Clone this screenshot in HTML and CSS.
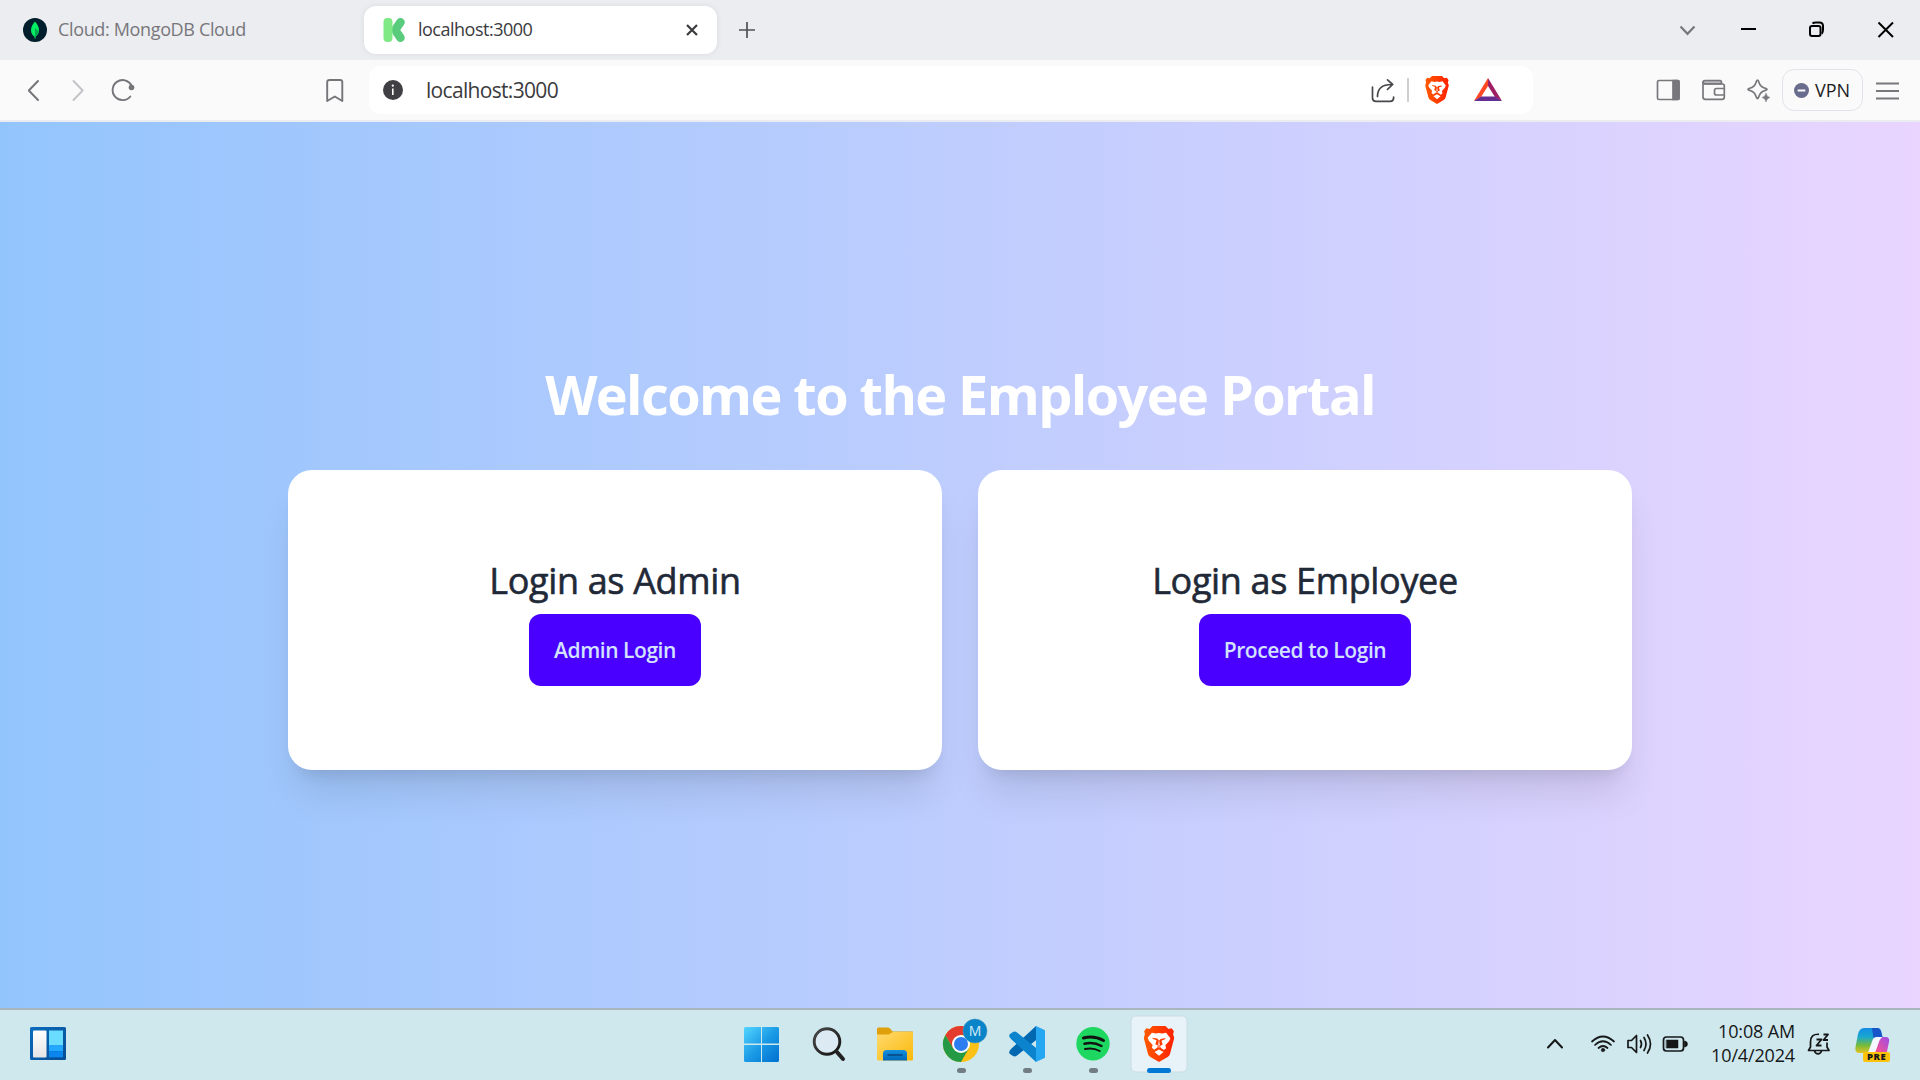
FILE: index.html
```html
<!DOCTYPE html>
<html lang="en">
<head>
<meta charset="utf-8">
<title>localhost:3000</title>
<link rel="stylesheet" href="styles.css">
</head>
<body>
<header class="tab-strip">
  <div class="tab">
    <svg class="tab-icon" viewBox="0 0 24 24"><circle cx="12" cy="12" r="12" fill="#001e2b"/><path d="M12 3.5C9.8 6 8 8.5 8 12.2c0 3 1.6 5 3.4 6.3l.2 2h.8l.2-2c1.8-1.300 3.400-3.300 3.400-6.300C16 8.500 14.200 6 12 3.500z" fill="#00ed64"/><path d="M12 10v10.500h.400l.2-2c1.600-1.200 2.900-2.600 3.200-5z" fill="#00a84f"/></svg>
    <span>Cloud: MongoDB Cloud</span>
  </div>
  <div class="tab tab-active">
    <svg class="tab-icon" viewBox="0 0 24 24"><path d="M18.500 4.300L14.800 9.500Q13 12 14.800 14.500L18.500 19.700" fill="none" stroke="#58cb7d" stroke-width="8.500" stroke-linecap="round"/><rect x="1.500" y="0" width="9" height="24" rx="4" fill="#7fe985"/></svg>
    <span>localhost:3000</span>
    <svg class="tab-close" viewBox="0 0 12 12"><path d="M1 1l10 10M11 1L1 11" stroke="#3b3b3e" stroke-width="2.200"/></svg>
  </div>
  <svg class="new-tab" viewBox="0 0 60 60"><path d="M30 22v16M22 30h16" stroke="#505055" stroke-width="1.700"/></svg>
  <svg class="window-controls" viewBox="1660 0 260 60" fill="none" stroke="#000" stroke-width="2">
    <path d="M1680.500 26.500l7 7.300 7-7.300" stroke="#77777c" stroke-width="2.200"/>
    <path d="M1741 29h15"/>
    <rect x="1810" y="26" width="10.500" height="10" rx="2"/><path d="M1812.500 23.500q1-1 3.500-1h3.500q3.500 0 3.500 3.500v3.500q0 3-1.200 4.300"/>
    <path d="M1878.500 22.500l14.500 14.500M1893 22.500L1878.500 37"/>
  </svg>
</header>
<nav class="toolbar">
  <svg class="nav-icons" viewBox="0 60 369 60" fill="none" stroke="#747479" stroke-width="1.900" stroke-linecap="round" stroke-linejoin="round">
    <path d="M38 81L28.800 90.500 38 100"/>
    <path d="M73.500 81l9.200 9.500-9.200 9.500" stroke="#c3c3c7"/>
    <path d="M130.300 96.500A10 10 0 1 1 131.500 85.500"/><circle cx="131.500" cy="87.500" r="2.800" fill="#747479" stroke="none"/>
    <path d="M329.500 80h10.500q2.300 0 2.300 2.300V101l-7.500-4.500-7.600 4.500V82.300q0-2.300 2.300-2.300z"/>
  </svg>
  <div class="address">
    <svg class="info" viewBox="0 0 20 20"><circle cx="10" cy="10" r="10" fill="#404044"/><path d="M9.800 8.500V15" stroke="#fff" stroke-width="1.600"/><circle cx="9.800" cy="5.700" r="1.100" fill="#fff"/></svg>
    <span>localhost:3000</span>
    <svg class="address-icons" viewBox="1353 66 180 48" fill="none">
      <g stroke="#48484c" stroke-width="1.700" stroke-linecap="round" stroke-linejoin="round"><path d="M1372.500 87v11q0 3.300 3.300 3.300h14.500q3.300 0 3.300-3.300V97"/><path d="M1377.500 96.500q0-12 14-12M1387.500 79.800l5.200 4.700-5.200 4.800"/></g>
      <path d="M1408 78v24" stroke="#cfcfd2" stroke-width="2"/>
      <svg x="1425" y="76" width="24" height="28" viewBox="0 0 24 28"><use href="#lion"/></svg>
      <path d="M1488 78l-14 23 7-4 7-11z" fill="#ff4724"/><path d="M1488 78l14 23-7-4-7-11z" fill="#9e1f63"/><path d="M1474 101h28l-7-4.500h-14z" fill="#662d91"/>
    </svg>
  </div>
  <svg class="side-icons" viewBox="1640 60 142 60" fill="none" stroke="#77777c" stroke-width="1.700" stroke-linejoin="round">
    <rect x="1657.500" y="80.500" width="21.500" height="19" rx="1.500"/><path d="M1673 80.500h5q1 0 1 1v17q0 1-1 1h-5z" fill="#77777c"/>
    <path d="M1703 82.500q0-1.900 2-1.900h15q1.500 0 1.500 2.300v.800H1705z" fill="#d2d2d5"/><path d="M1703 82.500v14.500q0 2.300 2.300 2.300h17q2 0 2-2.300V86q0-2-2-2h-17.500q-1.800 0-1.800-1.500z"/><path d="M1724 88.500h-7.500q-2 0-2 2v2.500q0 2 2 2h7.500"/>
    <path d="M1757.500 80q.500 0 1 1.200c1.500 4.500 3 6 7.500 7.300q2 .800 0 1.600c-4.500 1.300-6 2.800-7.500 7.300q-1 2.500-2 0c-1.500-4.500-3-6-7.500-7.300q-2-.800 0-1.600c4.500-1.300 6-2.800 7.500-7.300q.500-1.200 1-1.200z"/><path d="M1766 93q.700 4 4 4.500-3.300.700-4 4.500-.700-3.800-4-4.500 3.300-.500 4-4.500z" fill="#77777c" stroke-width=".5"/>
  </svg>
  <div class="vpn"><svg class="vpn-dot" viewBox="0 0 15 15"><circle cx="7.500" cy="7.500" r="7.500" fill="#686d8d"/><path d="M3.700 7.500h7.600" stroke="#fff" stroke-width="2"/></svg><span>VPN</span></div>
  <svg class="menu" viewBox="1863 60 57 60"><path d="M1876 83.500h23M1876 91h23M1876 98.500h23" stroke="#77777c" stroke-width="1.800"/></svg>
</nav>
<main class="portal">
  <h1>Welcome to the Employee Portal</h1>
  <div class="cards">
    <section class="card"><h2>Login as Admin</h2><a class="btn btn-admin">Admin Login</a></section>
    <section class="card"><h2>Login as Employee</h2><a class="btn btn-employee">Proceed to Login</a></section>
  </div>
</main>
<footer class="taskbar">
  <svg class="widgets" viewBox="0 1010 96 70">
    <defs>
      <linearGradient id="wg" x2="1" y2="1"><stop stop-color="#0a6cbd"/><stop offset="1" stop-color="#084c94"/></linearGradient>
      <linearGradient id="ww" x2="0" y2="1"><stop stop-color="#fff"/><stop offset="1" stop-color="#e4e4e6"/></linearGradient>
    </defs>
    <rect x="30" y="1027" width="36" height="33" rx="1.500" fill="url(#wg)"/><rect x="33" y="1030.500" width="13.500" height="27" rx="1" fill="url(#ww)"/><path d="M49 1030.500h14v15H49z" fill="#69dcff"/><path d="M49 1045.300h14v6H49z" fill="#22a8ff"/><path d="M49 1051.300h14v6H49z" fill="#0b86ef"/>
  </svg>
  <svg class="apps" viewBox="730 1010 470 70">
    <defs>
      <linearGradient id="win" gradientUnits="userSpaceOnUse" x1="744" y1="1027" x2="779" y2="1062"><stop stop-color="#54d6ff"/><stop offset=".5" stop-color="#1b9be6"/><stop offset="1" stop-color="#0070cf"/></linearGradient>
      <linearGradient id="fold" x2="1" y2="1"><stop stop-color="#ffda6e"/><stop offset="1" stop-color="#fbb90b"/></linearGradient>
      <linearGradient id="fb" x2="0" y2="1"><stop stop-color="#1390df"/><stop offset="1" stop-color="#0067b9"/></linearGradient>
      <linearGradient id="orange"><stop stop-color="#ff5a00"/><stop offset="1" stop-color="#ff2000"/></linearGradient>
      <linearGradient id="lens" x2="1" y2="1"><stop stop-color="#4a4a4a"/><stop offset="1" stop-color="#111"/></linearGradient>
    </defs>
    <path d="M745 1027h16v16.500h-17V1028zM762 1027h16l1 1v15.500h-17zM744 1045h17v17h-16l-1-1zM762 1045h17v16l-1 1h-16z" fill="url(#win)"/>
    <circle cx="827" cy="1041.500" r="12.800" fill="#dcebf3" stroke="url(#lens)" stroke-width="2.900"/><path d="M836.500 1051.500l6.500 7.500" stroke="#222" stroke-width="4" stroke-linecap="round"/>
    <path d="M877 1029q0-1.500 1.500-1.500h9.500q1.500 0 2.500 1.500l2 2.500h20.500v9h-36z" fill="#dfa00b"/><path d="M877 1034.500h11.500l4.500-2.500h20v27.500q0 1-1 1h-34q-1 0-1-1z" fill="url(#fold)"/><path d="M883 1060.500v-7q0-3.500 3.500-3.500h17q3.500 0 3.500 3.500v7z" fill="url(#fb)"/><path d="M887.500 1055h15" stroke="#084b86" stroke-width="1.700"/>
    <circle cx="961" cy="1044" r="18" fill="#fbc116"/><path d="M961 1035h15.600A18 18 0 0 0 945.400 1035l7.800 13.500z" fill="#e33b2e"/><path d="M945.400 1035A18 18 0 0 0 961 1062l7.800-13.500-15.600 0z" fill="#259a45"/><circle cx="961" cy="1044" r="9" fill="#fff"/><circle cx="961" cy="1044" r="7" fill="#2c7df0"/>
    <circle cx="975" cy="1031" r="12" fill="#0a84c9" stroke="#4899c1" stroke-width=".600"/><text class="badge" x="975" y="1036" text-anchor="middle">M</text>
    <path d="M1036 1026l-25 23q-3 3-1 5l3 2q2 1 4-.500l21-17z" fill="#0068b0"/><path d="M1036 1062l-25-23q-3-3-1-5l3-2q2-1 4 .500l21 17z" fill="#0b84cd"/><path d="M1036 1026l9 4.200v27.600l-9 4.200z" fill="#25a7f1"/>
    <circle cx="1093" cy="1043.700" r="16.700" fill="#1ed760"/><g fill="none" stroke="#121212" stroke-linecap="round"><path d="M1083.500 1038q10.500-2.800 20 2.500" stroke-width="3"/><path d="M1084.500 1043.800q9-2.300 17 2.200" stroke-width="2.500"/><path d="M1085 1049q8-1.800 14.700 2" stroke-width="2"/></g>
    <rect x="1131" y="1016" width="56" height="56" rx="5" fill="#e7f3f8" stroke="#cadde4"/>
    <svg x="1143.500" y="1026" width="31" height="36" viewBox="0 0 24 28" preserveAspectRatio="none">
      <g id="lion"><path d="M7 0h10l2.300 2.300 2.500-.500 1.700 2.300-.600 2.300.9 3-3.300 12.300q-.4 1.500-1.800 2.400L12 28l-6.700-3.900q-1.400-.9-1.800-2.400L.2 9.400l.9-3L.5 4.100l1.700-2.300 2.500.5z" fill="url(#orange)"/><path d="M6.500 5.300l3 .6 2.500-.500 2.500.500 3-.600 3.300 4.200-.900 2.200-3 3.300.600 2.300-1.700 1.400-2.500-1.700-.500-1.500 2-1.100-.9-3 2.600-1 .8-1-4 .700-1.200 1.200.5 3.500-.6.800.6.800-.6.600-.6-.600.6-.800-.6-.800.500-3.500L10.700 9.800l-4-.700.8 1 2.600 1-.9 3 2 1.100-.5 1.500-2.500 1.700-1.700-1.400.6-2.300-3-3.300-.9-2.200z" fill="#fff"/><path d="M12 18.300l3.500 2-3.500 2.900-3.500-2.900z" fill="#fff"/></g>
    </svg>
    <g fill="#717d82"><rect x="957" y="1068" width="9" height="5" rx="2.500"/><rect x="1023" y="1068" width="9" height="5" rx="2.500"/><rect x="1089" y="1068" width="9" height="5" rx="2.500"/></g><rect x="1147" y="1068" width="24" height="5" rx="2.500" fill="#0078d4"/>
  </svg>
  <svg class="tray" viewBox="1530 1010 170 70" fill="none" stroke="#151718" stroke-width="1.700" stroke-linecap="round" stroke-linejoin="round">
    <path d="M1548 1047.500l7-7.500 7 7.500" stroke-width="2"/>
    <path d="M1592 1041.500q11-10 22 0M1595 1045q8-7.500 16 0M1598.500 1048q4.500-4 9 0"/><circle cx="1603" cy="1050" r="1.800" fill="#151718" stroke-width=".5"/>
    <path d="M1628 1040.500h3.500l5-5v17l-5-5h-3.500zM1640.500 1040.500q2 3.500 0 7M1644 1037.500q4 6.500 0 13M1647.500 1035q6 9 0 18"/>
    <rect x="1663.500" y="1037" width="20" height="14" rx="3"/><rect x="1666.500" y="1040" width="11.500" height="8" fill="#151718" stroke-width=".5"/><path d="M1685 1041.500q2 .500 2 2.500t-2 2.500z" fill="#151718"/>
  </svg>
  <div class="clock"><span>10:08 AM</span><span>10/4/2024</span></div>
  <svg class="notify" viewBox="1795 1010 125 70" fill="none">
    <defs><linearGradient id="cp1" x2="0" y2="1"><stop stop-color="#158be6"/><stop offset=".35" stop-color="#18a8d0"/><stop offset=".7" stop-color="#78bb3a"/><stop offset="1" stop-color="#e5c321"/></linearGradient><linearGradient id="cp2" x1="1" x2="0" y2="1"><stop stop-color="#9a4de8"/><stop offset=".5" stop-color="#e9519f"/><stop offset="1" stop-color="#ff8a48"/></linearGradient></defs>
    <g stroke="#151718" stroke-width="1.700" stroke-linejoin="round"><path d="M1819 1034.300q-8.500-.5-8.500 7.700v5l-2 3.500h20.500l-2-3.500v-4.500M1814.500 1051q1 2.800 3.500 2.800t3.500-2.800"/><path d="M1816.500 1039.500h5l-5 6h5M1823.500 1034.500h4.500l-4.500 5.500h4.500" stroke-width="1.800"/></g>
    <path d="M1864 1028h13q3 0 4 3l1.500 6h-6q-3 0-4 3l-4 11q-1 2-3 2h-6q-5 0-4-6l2.500-13q1.500-6 6-6z" fill="url(#cp1)"/><path d="M1872 1028h5q3 0 4 3l1.500 6h-6q-2 0-3 1.500z" fill="#1755c9"/><path d="M1884 1037h1.500q4.500 0 3.500 5l-3 14q-1 5-5 5h-10q-3 0-3.500-4l-1-3.500h4q2 0 3-2.500l4-11q1-3 3.500-3z" fill="url(#cp2)"/><path d="M1876.500 1037h6q-2 1-3 3.500l-4 11q-1 2-3 2h-6q2-.5 2.500-2.500l4-11q1-3 3.500-3z" fill="#f5f8ff"/>
    <rect x="1863" y="1052" width="27" height="10" rx="2" fill="#ffc20a"/><text class="pre" x="1876.700" y="1060" text-anchor="middle">PRE</text>
  </svg>
</footer>
</body>
</html>
```
FILE: styles.css
```css
* { box-sizing: border-box; }
body { margin: 0; width: 1920px; height: 1080px; overflow: hidden; display: flex; flex-direction: column; font-family: "Open Sans", "Noto Sans", sans-serif; }
svg { display: block; flex: none; }
span { white-space: nowrap; }

.tab-strip { height: 60px; flex: none; display: flex; align-items: center; background: #ecedf1; }
.tab { width: 364px; height: 48px; padding: 0 0 2px 23px; display: flex; align-items: center; gap: 11px; font-size: 18px; letter-spacing: -.35px; color: #77777b; }
.tab-active { width: 353px; padding: 0 19px 2px 18px; gap: 12px; border-radius: 12px; background: #fff; color: #3b3b3e; letter-spacing: -.5px; box-shadow: 0 0 6px rgba(0, 0, 0, .08); }
.tab-icon, .tab-close { margin-top: 2px; }
.tab-icon { width: 24px; height: 24px; }
.tab-close { width: 12px; height: 12px; margin-left: auto; }
.new-tab { width: 60px; height: 60px; }
.window-controls { width: 260px; height: 60px; margin-left: auto; }

.toolbar { height: 62px; flex: none; display: flex; background: #fafafa; border-bottom: 2px solid #ebecf0; }
.nav-icons { width: 369px; height: 60px; }
.address { width: 1164px; height: 48px; margin-top: 6px; padding-left: 14px; display: flex; align-items: center; background: #fff; border-radius: 12px; font-size: 21px; letter-spacing: -.68px; color: #3b3b3e; }
.info { width: 20px; height: 20px; margin-right: 23px; }
.address-icons { width: 180px; height: 48px; margin-left: auto; }
.side-icons { width: 142px; height: 60px; margin-left: auto; }
.vpn { width: 81px; height: 42px; margin-top: 9px; display: flex; align-items: center; gap: 6px; padding-left: 11px; border: 1.5px solid #e2e2e9; border-radius: 12px; font-size: 18px; color: #1c1c22; }
.vpn-dot { width: 15px; height: 15px; }
.menu { width: 57px; height: 60px; }

.portal { height: 886px; flex: none; display: flex; flex-direction: column; align-items: center; justify-content: center; gap: 46px; padding-top: 4px; background: linear-gradient(to right, #93c5fd, #e9d5ff); }
h1 { margin: 0; font-size: 54px; line-height: 60px; font-weight: 700; letter-spacing: -1.57px; color: #fff; }
.cards { display: flex; gap: 36px; }
.card { width: 654px; height: 300px; display: flex; flex-direction: column; align-items: center; padding-top: 84px; background: #fff; border-radius: 24px; box-shadow: 0 30px 37.5px -7.5px rgba(0, 0, 0, .1), 0 12px 15px -9px rgba(0, 0, 0, .1); }
h2 { margin: 0 0 6px; font-size: 36px; line-height: 54px; font-weight: 500; letter-spacing: -.35px; color: #1f2937; -webkit-text-stroke: .6px #1f2937; }
.btn { height: 72px; display: flex; align-items: center; justify-content: center; border-radius: 12px; background: #4a00ff; color: #d2e2ff; font-size: 21px; font-weight: 600; letter-spacing: -.45px; }
.btn-admin { width: 172px; }
.btn-employee { width: 212px; }

.taskbar { height: 72px; flex: none; display: flex; background: #cfe8ed; border-top: 2px solid #a9b7bd; }
.widgets { width: 96px; height: 70px; }
.apps { width: 470px; height: 70px; margin-left: 634px; }
.badge { font-size: 14px; fill: #d5edf9; }
.tray { width: 170px; height: 70px; margin-left: auto; }
.clock { width: 95px; height: 70px; padding-top: 9px; display: flex; flex-direction: column; align-items: flex-end; font-size: 18px; line-height: 24px; letter-spacing: -.15px; color: #151718; }
.notify { width: 125px; height: 70px; }
.pre { font-size: 9.5px; font-weight: 800; fill: #151718; letter-spacing: .6px; }
```
